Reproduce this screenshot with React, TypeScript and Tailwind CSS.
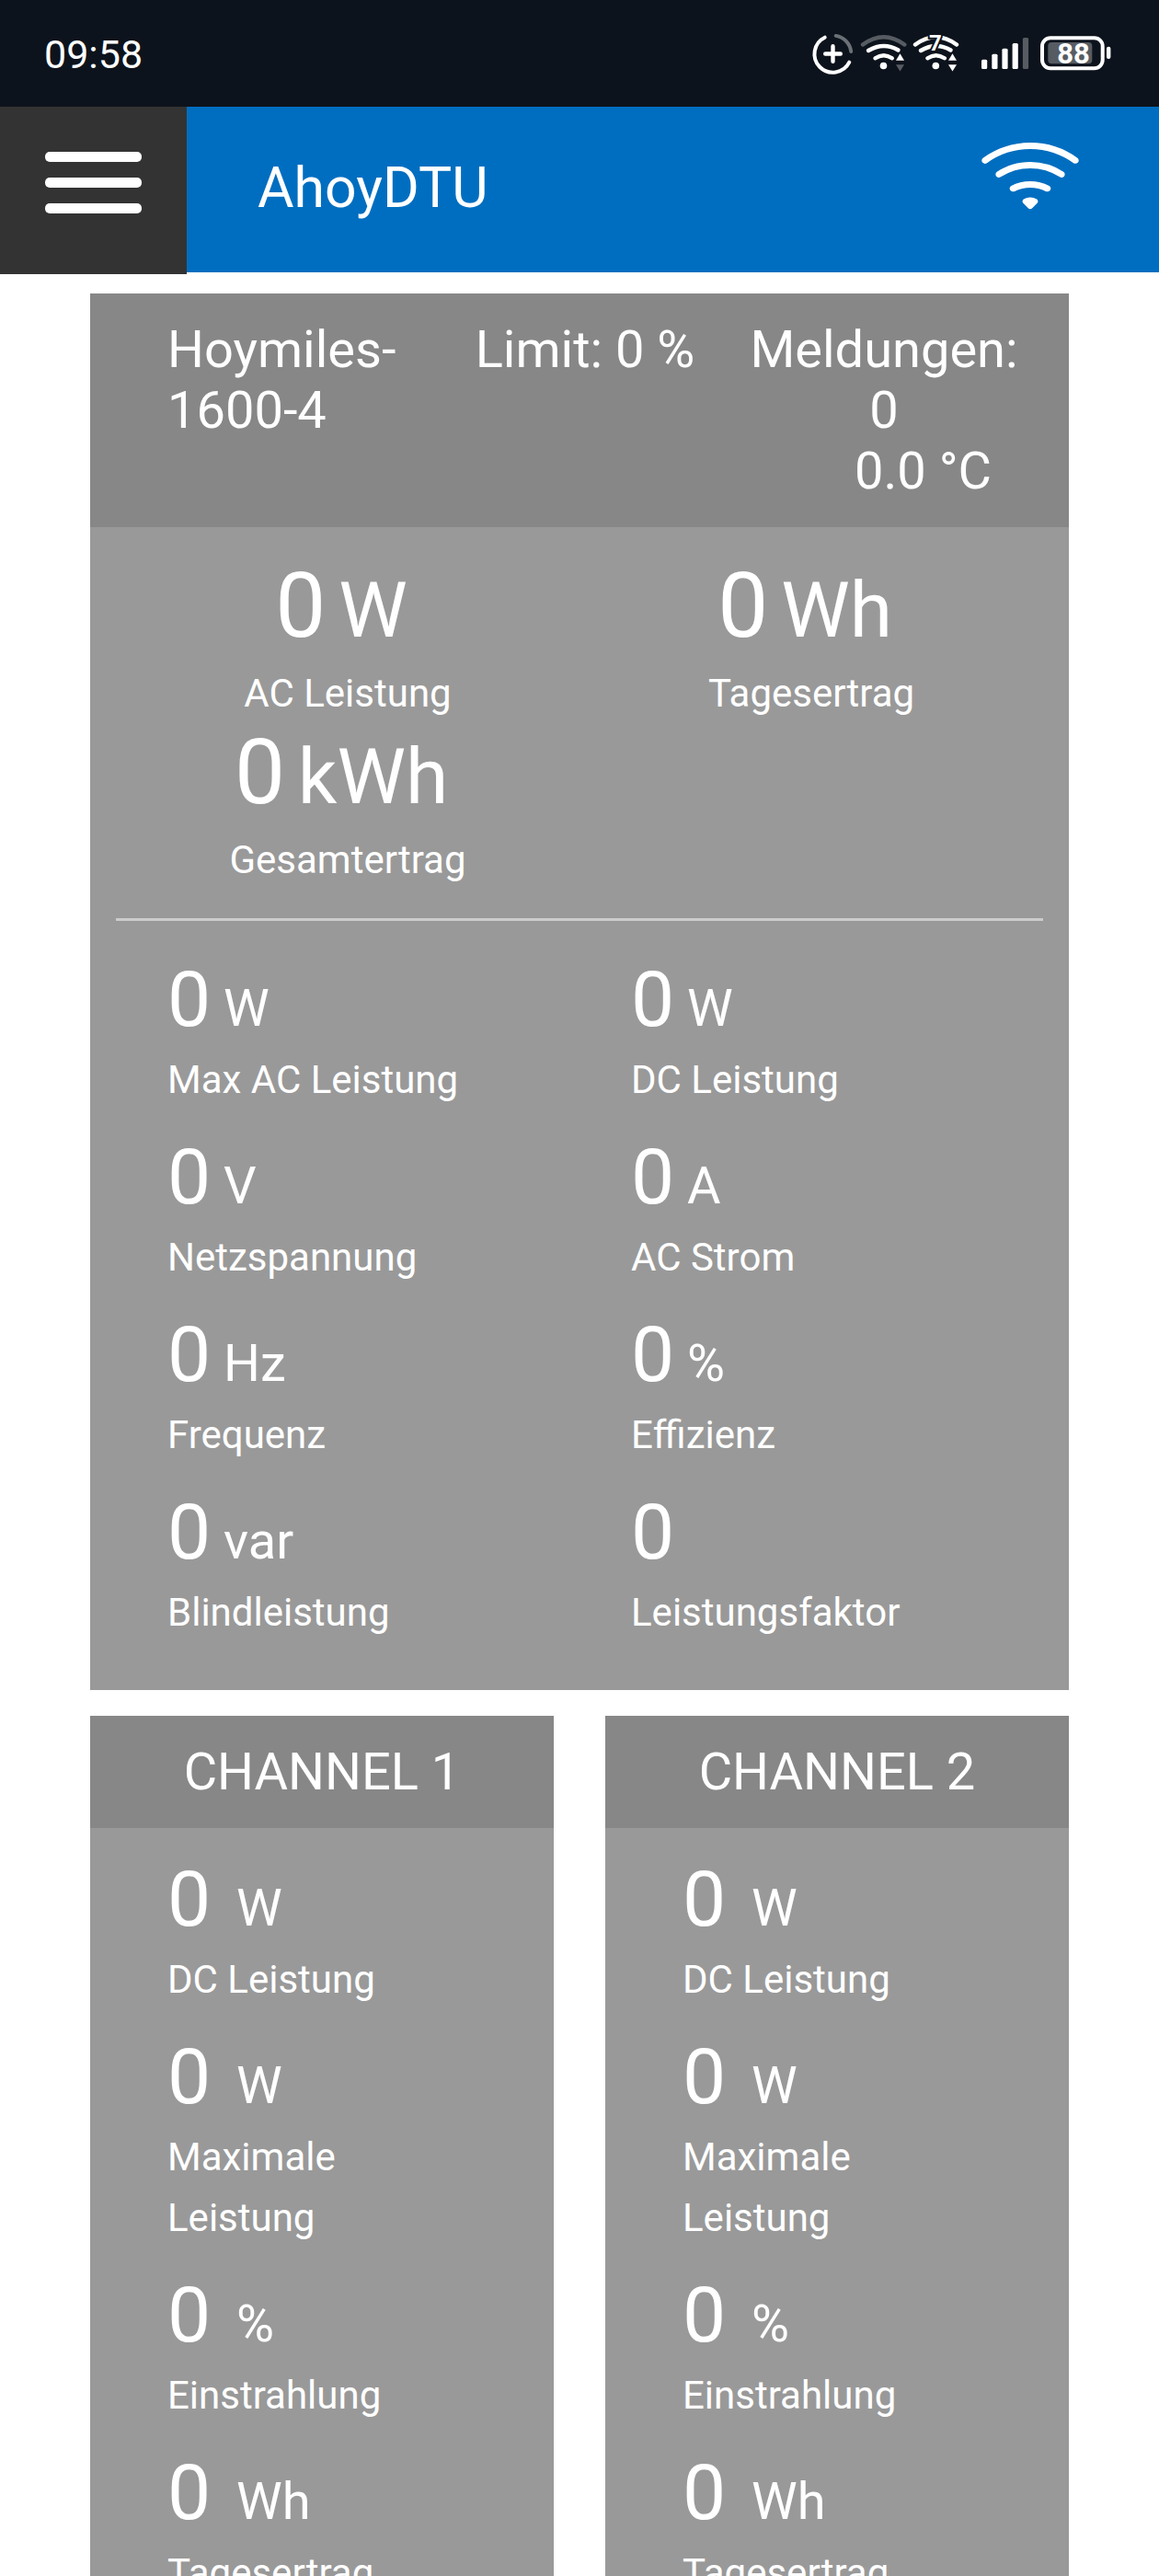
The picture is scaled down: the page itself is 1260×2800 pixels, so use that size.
import { BsWifi } from "react-icons/bs";

type Reading = { unit: string; label: string };

const totals: Reading[] = [
  { unit: "W", label: "AC Leistung" },
  { unit: "Wh", label: "Tagesertrag" },
  { unit: "kWh", label: "Gesamtertrag" },
];

const details: Reading[] = [
  { unit: "W", label: "Max AC Leistung" },
  { unit: "W", label: "DC Leistung" },
  { unit: "V", label: "Netzspannung" },
  { unit: "A", label: "AC Strom" },
  { unit: "Hz", label: "Frequenz" },
  { unit: "%", label: "Effizienz" },
  { unit: "var", label: "Blindleistung" },
  { unit: "", label: "Leistungsfaktor" },
];

const channelReadings: Reading[] = [
  { unit: "W", label: "DC Leistung" },
  { unit: "W", label: "Maximale Leistung" },
  { unit: "%", label: "Einstrahlung" },
  { unit: "Wh", label: "Tagesertrag" },
];

function StatusIcons() {
  return (
    <svg width="330" height="56" viewBox="880 30 330 56" fill="none" strokeLinecap="round">
      {/* data saver */}
      <g strokeWidth="4">
        <path d="M908.7 38.9A20 20 0 0 1 925.2 56" stroke="#6b7077" />
        <path d="M896.7 40.7A20 20 0 1 0 923.3 67.7" stroke="#fff" />
        <path d="M897.2 58.5H913.8M905.5 50.2V66.8" stroke="#fff" strokeWidth="4.4" />
      </g>

      {/* wifi */}
      <g stroke="#fff" strokeWidth="4.4">
        <path d="M938 48.5Q960.7 32 983.3 48.5" stroke="#575c63" />
        <path d="M944 55Q960.7 45.2 976.5 54.5" />
        <path d="M951.5 63.3Q960.7 57 969.8 63.3" />
      </g>
      <circle cx="960.5" cy="71.5" r="3.8" fill="#fff" />
      <path d="M974 65.8H983L978.5 58.2Z" fill="#fff" />
      <path d="M974 70.2H983L978.5 77.4Z" fill="#575c63" />

      {/* wifi 7 */}
      <g stroke="#fff" strokeWidth="4.4">
        <path d="M995 48.5Q1017.5 32 1040 48.5" />
        <path d="M1001 55Q1017.5 45.2 1033.5 54.5" />
        <path d="M1008.5 63.3Q1017.5 57 1026.8 63.3" />
      </g>
      <circle cx="1017.3" cy="71.5" r="3.8" fill="#fff" />
      <path d="M1031 65.8H1040L1035.5 58.2Z" fill="#fff" />
      <path d="M1031 70.2H1040L1035.5 77.4Z" fill="#fff" />
      <text
        x="1010"
        y="54.8"
        fontSize="24"
        fill="#fff"
        stroke="#0d131c"
        strokeWidth="4"
        paintOrder="stroke"
        className="font-bold"
      >
        7
      </text>

      {/* signal */}
      <g fill="#fff">
        <rect x="1067" y="64.7" width="6.2" height="10.3" rx="1.5" />
        <rect x="1078.3" y="58.7" width="6.2" height="16.3" rx="1.5" />
        <rect x="1089.4" y="52.7" width="6.2" height="22.3" rx="1.5" />
        <rect x="1100.6" y="47" width="6.2" height="28" rx="1.5" />
        <rect x="1111.9" y="41" width="6.2" height="34" rx="1.5" fill="#575c63" />
      </g>

      {/* battery */}
      <rect x="1133" y="41.2" width="65.7" height="33" rx="9" stroke="#fff" strokeWidth="4" />
      <rect x="1139.3" y="46" width="48" height="23.3" rx="4" fill="#575c63" />
      <rect x="1203" y="50.7" width="4.4" height="13.3" rx="2" fill="#fff" />
      <text x="1149.2" y="69" fontSize="31" fill="#fff" className="font-bold">
        88
      </text>
    </svg>
  );
}

function Label({ children }: { children: string }) {
  return (
    <div className="text-[56px]">
      <span className="text-[42px]">{children}</span>
    </div>
  );
}

function Value({ unit, wide }: { unit: string; wide?: boolean }) {
  return (
    <div className="text-[56px]">
      <span className="text-[84px]">0</span>
      {wide ? "\u00a0 " : " "}
      {unit}
    </div>
  );
}

function Channel({ name }: { name: string }) {
  return (
    <div className="flex-1 bg-[#999]">
      <div className="bg-[#878787] py-7 text-center text-[56px]">{name}</div>
      <div className="flex flex-col gap-7 py-7 pr-[140px] pl-[84px]">
        {channelReadings.map((r) => (
          <div key={r.label}>
            <Value unit={r.unit} wide />
            <Label>{r.label}</Label>
          </div>
        ))}
      </div>
    </div>
  );
}

export default function App() {
  return (
    <div className="h-[2800px] w-[1260px] overflow-hidden bg-white font-[Roboto,sans-serif] leading-[normal] text-white">
      <div className="flex h-[116px] items-start justify-between bg-[#0d131c] pr-[50px] pl-12">
        <span className="pt-[34px] text-[43px]">09:58</span>
        <div className="pt-[30px]">
          <StatusIcons />
        </div>
      </div>

      <header className="flex h-[180px] bg-[#006ec0]">
        <div className="flex h-[182px] w-[203px] flex-col gap-[17px] bg-[#333] pt-[49px] pl-[49px]">
          <div className="h-[11px] w-[105px] rounded-[5px] bg-white" />
          <div className="h-[11px] w-[105px] rounded-[5px] bg-white" />
          <div className="h-[11px] w-[105px] rounded-[5px] bg-white" />
        </div>
        <span className="flex-1 pt-[53px] pl-[77px] text-[60.7px]">AhoyDTU</span>
        <BsWifi className="mt-[18px] mr-[84px] h-28 w-28" />
      </header>

      <main className="px-[98px] pt-[23px]">
        <div className="bg-[#999]">
          <div className="flex bg-[#878787] py-7 pl-[84px] text-[56px]">
            <div className="w-[298px]">
              Hoymiles-
              <br />
              1600-4
            </div>
            <div className="w-[312px] text-center">Limit: 0 %</div>
            <div className="w-[338px] text-center">
              <div>Meldungen:</div>
              <div>0</div>
              <div className="pr-[52px] text-right">0.0 °C</div>
            </div>
          </div>

          <div className="px-7 pt-7">
            <div className="grid grid-cols-2 text-center">
              {totals.map((r) => (
                <div key={r.label}>
                  <div className="text-[56px]">
                    <span className="text-[98px]">0</span>{" "}
                    <span className="text-[84px]">{r.unit}</span>&nbsp;
                  </div>
                  <Label>{r.label}</Label>
                </div>
              ))}
            </div>
            <div className="mt-[35px] h-[3px] bg-[#ccc]" />
            <div className="grid grid-cols-2 gap-y-7 pt-9 pb-14">
              {details.map((r) => (
                <div key={r.label} className="pl-14">
                  <Value unit={r.unit} />
                  <Label>{r.label}</Label>
                </div>
              ))}
            </div>
          </div>
        </div>

        <div className="mt-7 flex gap-14">
          <Channel name="CHANNEL 1" />
          <Channel name="CHANNEL 2" />
        </div>
      </main>
    </div>
  );
}
